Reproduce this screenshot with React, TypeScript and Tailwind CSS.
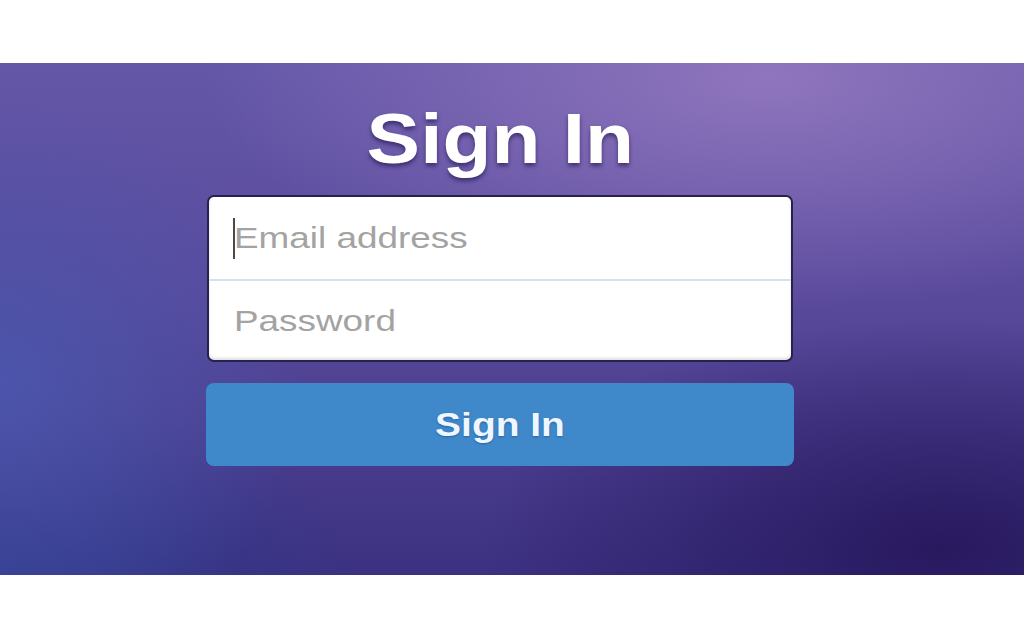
export default function App() {
  return (
    <div className="min-h-screen bg-white pt-[63px] font-['Liberation_Sans',Arial,sans-serif]">
      {/* Purple hero */}
      <section className="h-[512px] bg-[radial-gradient(ellipse_55%_45%_at_75%_3%,#8f75bd_0%,rgba(143,117,189,0)_100%),radial-gradient(ellipse_30%_55%_at_0%_62%,#4b55ab_0%,rgba(75,85,171,0)_100%),radial-gradient(ellipse_45%_45%_at_92%_95%,#28195f_0%,rgba(40,25,95,0)_100%),radial-gradient(ellipse_35%_35%_at_0%_100%,#2f3a8c_0%,rgba(47,58,140,0)_100%),linear-gradient(180deg,#6457a8_0%,#5a4a9c_45%,#3c3181_100%)]">
        <div className="flex flex-col items-center pt-[40px] pr-[24px]">
          <h1 className="text-[71px] leading-none font-bold text-white [text-shadow:0_3px_4px_rgba(20,10,60,0.55)]">
            <span className="inline-block scale-x-[1.13]">Sign In</span>
          </h1>

          <div className="mt-[21px] w-[586px] h-[167px] rounded-[7px] border-2 border-[#26224c] bg-white overflow-hidden flex flex-col shadow-[inset_0_-2px_3px_rgba(0,0,0,0.12)]">
            <div className="relative h-[84px] border-b-2 border-[#d5e2ee]">
              <span className="absolute left-[24px] top-[21px] h-[41px] w-[2px] bg-[#4a4a4a]" />
              <input
                type="email"
                placeholder="Email address"
                className="w-[80%] h-full pl-[20px] origin-left scale-x-125 text-[29.5px] bg-transparent outline-none placeholder:text-[#a3a3a3]"
              />
            </div>
            <div className="flex-1">
              <input
                type="password"
                placeholder="Password"
                className="w-[80%] h-full pl-[20px] origin-left scale-x-125 text-[29.5px] bg-transparent outline-none placeholder:text-[#a3a3a3]"
              />
            </div>
          </div>

          <button className="mt-[21px] w-[588px] h-[83px] rounded-[8px] bg-[#3f89cb] text-[33px] font-bold text-[#eef6ff] [text-shadow:0_1px_2px_rgba(0,30,80,0.35)]">
            <span className="inline-block scale-x-[1.18]">Sign In</span>
          </button>
        </div>
      </section>
    </div>
  );
}
